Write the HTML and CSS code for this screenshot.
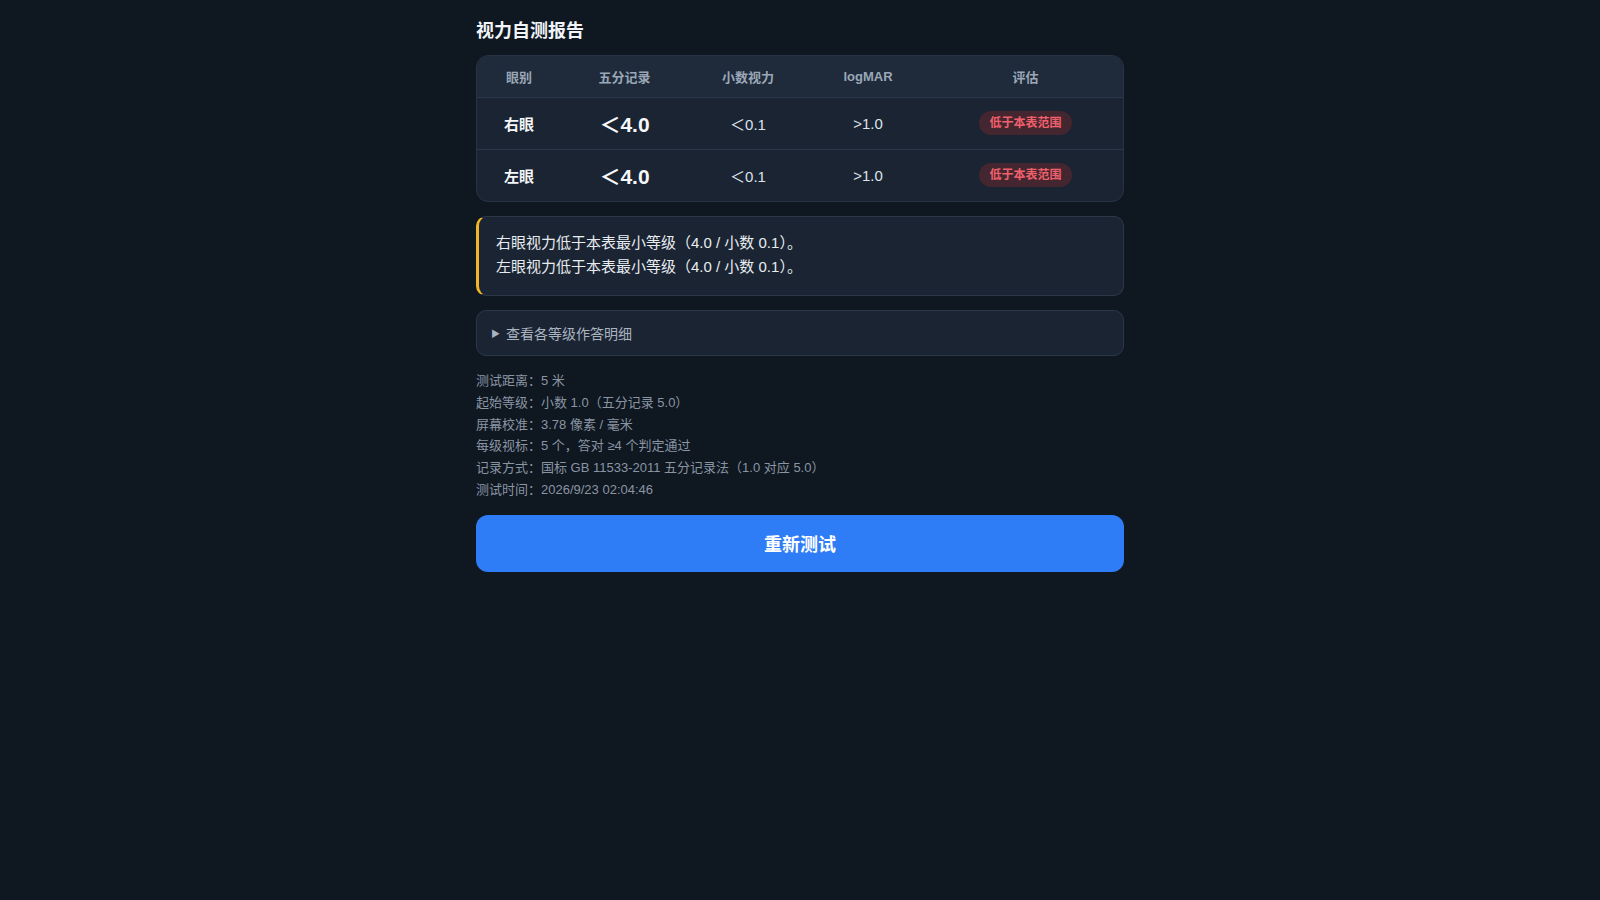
FILE: index.html
```html
<!DOCTYPE html>
<html lang="zh-CN">
<head>
<meta charset="utf-8">
<title>视力自测报告</title>
<link rel="stylesheet" href="styles.css">
</head>
<body>
<main class="page">
  <h1 class="title">视力自测报告</h1>

  <div class="table-card">
    <table class="report">
      <colgroup>
        <col class="c1"><col class="c2"><col class="c3"><col class="c4"><col class="c5">
      </colgroup>
      <thead>
        <tr><th>眼别</th><th>五分记录</th><th>小数视力</th><th>logMAR</th><th>评估</th></tr>
      </thead>
      <tbody>
        <tr>
          <td class="eye">右眼</td>
          <td class="five">＜4.0</td>
          <td class="num">＜0.1</td>
          <td class="num">&gt;1.0</td>
          <td><span class="badge">低于本表范围</span></td>
        </tr>
        <tr>
          <td class="eye">左眼</td>
          <td class="five">＜4.0</td>
          <td class="num">＜0.1</td>
          <td class="num">&gt;1.0</td>
          <td><span class="badge">低于本表范围</span></td>
        </tr>
      </tbody>
    </table>
  </div>

  <div class="notice">
    <p>右眼视力低于本表最小等级（4.0 / 小数 0.1）。</p>
    <p>左眼视力低于本表最小等级（4.0 / 小数 0.1）。</p>
  </div>

  <details class="details">
    <summary><span class="tri">▶</span>查看各等级作答明细</summary>
  </details>

  <ul class="meta">
    <li>测试距离：5 米</li>
    <li>起始等级：小数 1.0（五分记录 5.0）</li>
    <li>屏幕校准：3.78 像素 / 毫米</li>
    <li>每级视标：5 个，答对 ≥4 个判定通过</li>
    <li>记录方式：国标 GB 11533-2011 五分记录法（1.0 对应 5.0）</li>
    <li>测试时间：2026/9/23 02:04:46</li>
  </ul>

  <button class="retest" type="button">重新测试</button>
</main>
</body>
</html>
```

FILE: styles.css
```css
* { box-sizing: border-box; }

html, body {
  margin: 0;
  padding: 0;
  background: #0f1720;
}

body {
  font-family: "Liberation Sans", "Noto Sans CJK SC", sans-serif;
  color: #e5e9ef;
}

.page {
  width: 648px;
  margin: 0 auto;
  padding-top: 19px;
  display: flex;
  flex-direction: column;
}

.title {
  margin: 0 0 11px;
  font-size: 18px;
  line-height: 25px;
  font-weight: 700;
  color: #f1f4f8;
}

.table-card {
  border: 1px solid #263345;
  border-radius: 12px;
  overflow: hidden;
  background: #1b2432;
}

.report {
  width: 100%;
  border-collapse: collapse;
  table-layout: fixed;
}

.c1 { width: 84px; }
.c2 { width: 127px; }
.c3 { width: 120px; }
.c4 { width: 120px; }
.c5 { width: auto; }

.report th {
  height: 41px;
  background: #1f2b3b;
  color: #9ba7b6;
  font-size: 13px;
  font-weight: 700;
  text-align: center;
  padding: 0;
  border-bottom: 1px solid #2b3849;
}

.report td {
  height: 52px;
  text-align: center;
  vertical-align: middle;
  padding: 0;
  border-bottom: 1px solid #2b3849;
}

.report tbody tr:last-child td { border-bottom: none; }

.eye {
  font-size: 15px;
  font-weight: 700;
  color: #f5f7fa;
}

.five {
  font-size: 21px;
  font-weight: 700;
  color: #f5f7fa;
}

.num {
  font-size: 15px;
  color: #dde3ea;
}

.badge {
  display: inline-block;
  vertical-align: middle;
  padding: 0 10px;
  height: 24px;
  line-height: 24px;
  border-radius: 12px;
  background: #43262f;
  color: #f0606c;
  font-size: 12px;
  font-weight: 700;
}

.notice {
  margin-top: 14px;
  padding: 14px 18px 16px 17px;
  border: 1px solid #2b3849;
  border-left: 3px solid #f2b526;
  border-radius: 10px;
  background: #1b2432;
}

.notice p {
  margin: 0;
  font-size: 15px;
  line-height: 24px;
  color: #e8ecf1;
}

.details {
  margin-top: 14px;
  border: 1px solid #2b3849;
  border-radius: 10px;
  background: #1b2432;
}

.details summary {
  list-style: none;
  display: flex;
  align-items: center;
  height: 44px;
  padding: 0 14px;
  font-size: 14px;
  color: #aab4c1;
  cursor: pointer;
}

.details summary::-webkit-details-marker { display: none; }

.tri {
  font-size: 9px;
  margin-right: 6px;
  color: #aab4c1;
}

.meta {
  list-style: none;
  margin: 14px 0 0;
  padding: 0;
}

.meta li {
  font-size: 13px;
  line-height: 21.8px;
  color: #8a95a4;
}

.retest {
  margin-top: 14px;
  height: 57px;
  border: none;
  border-radius: 12px;
  background: #2f7df6;
  color: #ffffff;
  font-family: "Liberation Sans", "Noto Sans CJK SC", sans-serif;
  font-size: 18px;
  font-weight: 700;
  cursor: pointer;
}
```
